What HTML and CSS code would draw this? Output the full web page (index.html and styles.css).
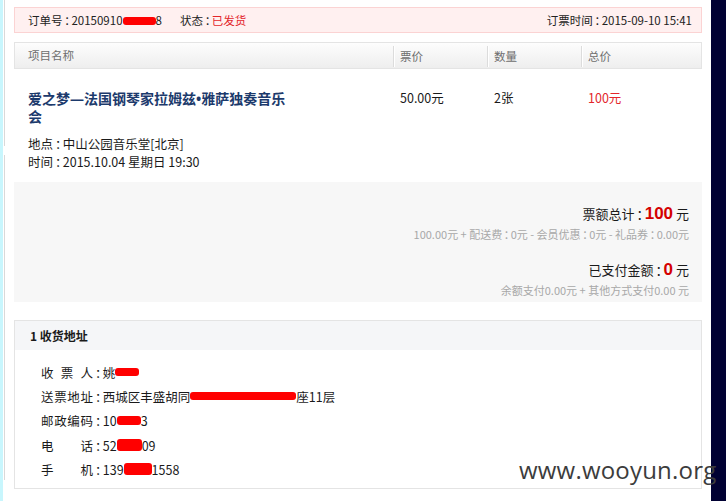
FILE: index.html
```html
<!DOCTYPE html>
<html lang="zh-CN">
<head>
<meta charset="utf-8">
<title>订单详情</title>
<link rel="stylesheet" href="styles.css">
</head>
<body>
<div class="screen">
  <div class="edge"></div>
  <div class="gutter">
    <div class="seg seg-top"></div>
    <div class="seg seg-bottom"></div>
  </div>
  <main class="main">
    <div class="orderbar">
      <div class="orderbar-left">
        <span>订单号<span class="colon">：</span>20150910<i class="redact r-order"></i>8</span>
        <span class="status">状态<span class="colon">：</span><em>已发货</em></span>
      </div>
      <div class="orderbar-right">订票时间<span class="colon">：</span>2015-09-10 15:41</div>
    </div>

    <div class="thead">
      <div class="th c1">项目名称</div>
      <div class="th c2">票价</div>
      <div class="th c3">数量</div>
      <div class="th c4">总价</div>
    </div>

    <div class="trow">
      <div class="td c1 item">
        <h1 class="title">爱之梦—法国钢琴家拉姆兹•雅萨独奏音乐会</h1>
        <p class="meta">地点<span class="colon">：</span>中山公园音乐堂[北京]</p>
        <p class="meta">时间<span class="colon">：</span>2015.10.04 星期日 19:30</p>
      </div>
      <div class="td c2 cell">50.00元</div>
      <div class="td c3 cell">2张</div>
      <div class="td c4 cell total">100元</div>
    </div>

    <div class="summary">
      <div class="sum-line">票额总计<span class="colon">：</span><strong>100</strong> 元</div>
      <div class="sum-detail">100.00元 + 配送费<span class="colon">：</span>0元 - 会员优惠<span class="colon">：</span>0元 - 礼品券<span class="colon">：</span>0.00元</div>
      <div class="sum-line paid">已支付金额<span class="colon">：</span><strong>0</strong> 元</div>
      <div class="sum-detail">余额支付0.00元 + 其他方式支付0.00 元</div>
    </div>

    <section class="addr">
      <div class="addr-head">1 收货地址</div>
      <div class="addr-body">
        <div class="addr-row"><span class="lbl">收票人</span><span class="colon">：</span>姚<i class="redact r-name"></i></div>
        <div class="addr-row"><span class="lbl">送票地址</span><span class="colon">：</span>西城区丰盛胡同<i class="redact r-addr"></i>座11层</div>
        <div class="addr-row"><span class="lbl">邮政编码</span><span class="colon">：</span>10<i class="redact r-zip"></i>3</div>
        <div class="addr-row"><span class="lbl">电话</span><span class="colon">：</span>52<i class="redact r-tel"></i>09</div>
        <div class="addr-row"><span class="lbl">手机</span><span class="colon">：</span>139<i class="redact r-mob"></i>1558</div>
      </div>
    </section>
  </main>
  <div class="spacer"></div>
  <div class="dark"></div>
</div>
<div class="watermark">www.wooyun.org</div>
</body>
</html>
```

FILE: styles.css
```css
html, body {
  margin: 0;
  padding: 0;
  background: #ffffff;
}

body {
  font-family: "Noto Sans CJK SC", sans-serif;
  font-size: 12px;
  color: #333333;
  width: 726px;
  height: 501px;
  overflow: hidden;
  position: relative;
}

.screen {
  display: flex;
  height: 501px;
}

.edge {
  width: 3px;
  background: #c8f6fd;
  flex: none;
}

.gutter {
  width: 10px;
  padding-left: 1px;
  flex: none;
  display: flex;
  flex-direction: column;
}

.seg {
  width: 1px;
  background: #d9d9d9;
}

.seg-top {
  height: 146px;
}

.seg-bottom {
  margin-top: 9px;
  height: 325px;
}

.main {
  width: 688px;
  flex: none;
  padding-top: 7px;
}

.spacer {
  width: 9px;
  flex: none;
}

.dark {
  width: 15px;
  flex: none;
  background: #010133;
}

/* narrow full-width colon, as in the original font */
.colon {
  display: inline-block;
  margin-left: 0.15em;
  letter-spacing: -0.45em;
  margin-right: 0.08em;
}

/* order bar */
.orderbar {
  height: 24px;
  border: 1px solid #fbd3d3;
  background: #fff0f0;
  display: flex;
  justify-content: space-between;
  align-items: center;
  padding: 0 9px 0 13px;
  line-height: 24px;
  font-size: 11.5px;
  color: #222222;
}

.orderbar-left {
  display: flex;
  gap: 18px;
}

.status em {
  font-style: normal;
  color: #e3262b;
}

.redact {
  display: inline-block;
  background: #ff0000;
  border-radius: 3px;
  vertical-align: middle;
}

.r-order {
  width: 33px;
  height: 8px;
  margin-top: -2px;
}

/* table header */
.thead {
  margin-top: 9px;
  height: 25px;
  border: 1px solid #e4e4e4;
  background: linear-gradient(#fdfdfd, #eeeeee);
  display: flex;
  color: #6e6e6e;
  font-size: 11.5px;
  line-height: 25px;
}

.th {
  padding-left: 6px;
}

.th.c1 {
  padding-left: 13px;
}

.th.c2, .th.c3, .th.c4 {
  border-left: 1px solid #dcdcdc;
  box-shadow: inset 1px 0 #ffffff;
  margin: 3px 0 1px;
  line-height: 21px;
}

.c1 { width: 365px; }
.c2 { width: 87px; }
.c3 { width: 87px; }
.c4 { width: 113px; }

/* product row */
.trow {
  display: flex;
  padding: 0 1px;
  height: 113px;
}

.item {
  padding: 21px 0 0 13px;
}

.title {
  margin: 0;
  width: 262px;
  font-family: "Open Sans", "Noto Sans CJK SC", sans-serif;
  font-size: 14px;
  line-height: 18px;
  font-weight: bold;
  color: #1c3a6c;
}

.meta {
  margin: 0;
  font-size: 12.5px;
  line-height: 18px;
  color: #1a1a1a;
}

.title + .meta {
  margin-top: 9px;
}

.cell {
  padding: 20px 0 0 7px;
  font-size: 12.5px;
  line-height: 18px;
  color: #1a1a1a;
}

.total {
  color: #e3262b;
}

/* summary */
.summary {
  background: #f7f7f7;
  padding: 20px 13px 4px;
  text-align: right;
  height: 96px;
}

.sum-line {
  font-size: 13px;
  line-height: 24px;
  color: #1a1a1a;
}

.sum-line strong {
  font-size: 17px;
  color: #d40000;
  font-family: "Liberation Sans", "Noto Sans CJK SC", sans-serif;
}

.sum-detail {
  font-size: 11px;
  line-height: 16px;
  color: #a8a8a8;
}

.sum-line.paid {
  margin-top: 16px;
}

/* address */
.addr {
  margin-top: 18px;
  border: 1px solid #e4e4e4;
  height: 167px;
}

.addr-head {
  height: 29px;
  line-height: 29px;
  background: #f5f6f8;
  padding-left: 15px;
  font-size: 12px;
  font-weight: bold;
  color: #1a1a1a;
}

.addr-body {
  padding: 10px 0 0 26px;
}

.addr-row {
  display: flex;
  align-items: center;
  height: 24.3px;
  font-size: 12.5px;
  color: #1a1a1a;
}

.lbl {
  width: 52px;
  text-align: justify;
  text-align-last: justify;
}

.r-name {
  width: 24px;
  height: 8px;
}

.r-addr {
  width: 106px;
  height: 8px;
}

.r-zip {
  width: 24px;
  height: 9px;
}

.r-tel {
  width: 25px;
  height: 12px;
}

.r-mob {
  width: 28px;
  height: 12px;
}

/* watermark */
.watermark {
  position: absolute;
  left: 519px;
  top: 455px;
  font-family: "Open Sans", sans-serif;
  font-size: 24px;
  line-height: 30px;
  color: #3c3c3c;
  letter-spacing: 0.2px;
}
```
